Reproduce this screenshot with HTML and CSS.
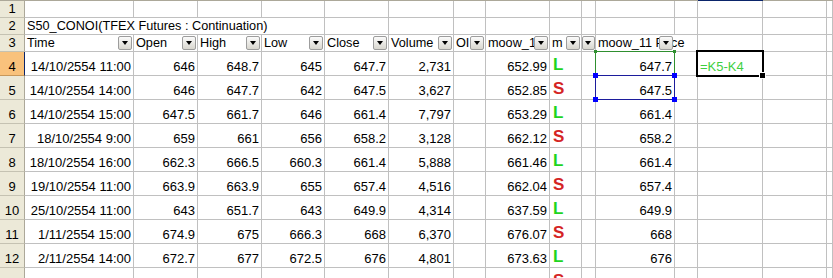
FILE: index.html
```html
<!DOCTYPE html>
<html lang="th">
<head>
    <meta charset="UTF-8">
    <title>S50_CONOI</title>
    <link rel="stylesheet" href="styles.css">
</head>
<body>

<div class="sheet">
    <!-- bottom edge of the column headers -->
    <div class="strip"></div><div class="strip"></div><div class="strip"></div><div class="strip"></div>
    <div class="strip"></div><div class="strip"></div><div class="strip"></div><div class="strip"></div>
    <div class="strip"></div><div class="strip"></div><div class="strip"></div><div class="strip"></div>
    <div class="strip"></div><div class="strip sel"></div><div class="strip"></div><div class="strip"></div>

    <!-- row 1 -->
    <div class="c rh">1</div>
    <div class="c"></div><div class="c"></div><div class="c"></div><div class="c"></div><div class="c"></div>
    <div class="c"></div><div class="c"></div><div class="c"></div><div class="c"></div><div class="c"></div>
    <div class="c"></div><div class="c"></div><div class="c"></div><div class="c"></div><div class="c"></div>

    <!-- row 2 -->
    <div class="c rh">2</div>
    <div class="c title">S50_CONOI(TFEX Futures : Continuation)</div>
    <div class="c"></div><div class="c"></div><div class="c"></div><div class="c"></div><div class="c"></div>
    <div class="c"></div><div class="c"></div><div class="c"></div><div class="c"></div><div class="c"></div>
    <div class="c"></div>

    <!-- row 3 : autofilter -->
    <div class="c rh">3</div>
    <div class="c hd">Time<span class="dd"></span></div>
    <div class="c hd">Open<span class="dd"></span></div>
    <div class="c hd">High<span class="dd"></span></div>
    <div class="c hd">Low<span class="dd"></span></div>
    <div class="c hd">Close<span class="dd"></span></div>
    <div class="c hd">Volume<span class="dd"></span></div>
    <div class="c hd">OI<span class="dd"></span></div>
    <div class="c hd">moow_1<span class="dd"></span></div>
    <div class="c hd">m<span class="dd"></span></div>
    <div class="c hd"><span class="dd dd-j"></span></div>
    <div class="c hd spill"><span class="txt">moow_11 Price</span><span class="dd"></span></div>
    <div class="c hd"></div>
    <div class="c"></div><div class="c"></div><div class="c"></div>
</div>

<script>
    var rows = [
        ["14/10/2554 11:00", "646", "648.7", "645", "647.7", "2,731", "652.99", "L", "647.7"],
        ["14/10/2554 14:00", "646", "647.7", "642", "647.5", "3,627", "652.85", "S", "647.5"],
        ["14/10/2554 15:00", "647.5", "661.7", "646", "661.4", "7,797", "653.29", "L", "661.4"],
        ["18/10/2554 9:00", "659", "661", "656", "658.2", "3,128", "662.12", "S", "658.2"],
        ["18/10/2554 16:00", "662.3", "666.5", "660.3", "661.4", "5,888", "661.46", "L", "661.4"],
        ["19/10/2554 11:00", "663.9", "663.9", "655", "657.4", "4,516", "662.04", "S", "657.4"],
        ["25/10/2554 11:00", "643", "651.7", "643", "649.9", "4,314", "637.59", "L", "649.9"],
        ["1/11/2554 15:00", "674.9", "675", "666.3", "668", "6,370", "676.07", "S", "668"],
        ["2/11/2554 14:00", "672.7", "677", "672.5", "676", "4,801", "673.63", "L", "676"],
        ["3/11/2554 10:00", "676", "678.9", "672.5", "674", "4,344", "673.73", "S", "674"]
    ];

    var sheet = document.querySelector(".sheet");
    var html = "";

    rows.forEach(function(r, i) {
        var n = i + 4;
        html += '<div class="c rh' + (n == 4 ? ' on' : '') + '">' + n + '</div>';
        for (var k = 0; k < 6; k++) {
            html += '<div class="c num">' + r[k] + '</div>';
        }
        html += '<div class="c"></div>';
        html += '<div class="c num">' + r[6] + '</div>';
        html += '<div class="c sig ' + (r[7] == "L" ? "long" : "short") + '">' + r[7] + '</div>';
        html += '<div class="c"></div>';

        // range boxes of the formula being edited (K4 green, K5 blue)
        var box = "";
        if (n == 4) box = '<div class="ref ref-green"><i class="h tl"></i><i class="h tr"></i></div>';
        if (n == 5) box = '<div class="ref ref-blue"><i class="h tl"></i><i class="h tr"></i><i class="h bl"></i><i class="h br"></i></div>';
        html += '<div class="c num">' + r[8] + box + '</div>';

        html += '<div class="c"></div>';
        if (n == 4) {
            html += '<div class="c formula">=K5-K4<div class="active"><i class="fill"></i></div></div>';
        } else {
            html += '<div class="c"></div>';
        }
        html += '<div class="c"></div><div class="c"></div>';
    });

    sheet.insertAdjacentHTML("beforeend", html);
</script>

</body>
</html>
```

FILE: styles.css
```css
body {
    margin: 0;
    background: #fff;
    font-family: "Liberation Sans", Arial, sans-serif;
    font-size: 13px;
    color: #000;
    overflow: hidden;
}
.sheet {
    display: grid;
    grid-template-columns: 25px 109px 64px 64px 63px 64px 65px 32px 64px 32px 14px 79px 23px 65px 64px 1fr;
    grid-template-rows: 1px 17px 17px 17px repeat(10, 24px);
    width: 833px;
    height: 278px;
    overflow: hidden;
}
.strip {
    background: #aca899;
}
.strip.sel {
    background: #0a246a;
}
.c {
    box-sizing: border-box;
    border-right: 1px solid #c0c0c0;
    border-bottom: 1px solid #c0c0c0;
    display: flex;
    align-items: flex-end;
    line-height: 15px;
    white-space: nowrap;
    padding: 0 2px 0 2px;
    position: relative;
    min-width: 0;
}
.rh {
    background: #ece9d8;
    border-right-color: #aca899;
    border-bottom-color: #c5c2b2;
    justify-content: center;
    padding: 0 0 1px 0;
}
.rh.on {
    background: #f9c27c;
    border-right-color: #0a246a;
    border-bottom-color: #c8985a;
}
.title {
    grid-column: span 4;
    font-size: 12.7px;
}
.hd {
    padding-left: 2px;
    font-size: 12.7px;
}
.spill {
    border-right-color: #fff;
    overflow: visible;
}
.spill .txt {
    position: relative;
    z-index: 1;
}
/* autofilter button */
.dd {
    position: absolute;
    right: 1px;
    top: 1px;
    width: 14px;
    height: 14px;
    box-sizing: border-box;
    border: 1px solid #9d9d9d;
    border-radius: 2px;
    background: linear-gradient(#fbfbfb, #d9d7cf);
    z-index: 2;
}
.dd::after {
    content: "";
    position: absolute;
    left: 3px;
    top: 4px;
    border-left: 3.5px solid transparent;
    border-right: 3.5px solid transparent;
    border-top: 4px solid #000;
}
.dd-j {
    right: 0;
    width: 13px;
}
.dd-j::after {
    left: 2px;
}
.num {
    justify-content: flex-end;
    padding-bottom: 1px;
}
.sig {
    font-size: 17px;
    font-weight: bold;
    padding: 0 0 3px 3px;
}
.long {
    color: #1fd41f;
}
.short {
    color: #d42424;
}
.formula {
    color: #3fcf3f;
    padding-bottom: 1px;
}
/* reference ranges */
.ref {
    position: absolute;
    left: -1px;
    top: -1px;
    right: -1px;
    bottom: -1px;
    z-index: 3;
}
.ref-green {
    border: 1px solid #2f8f2f;
}
.ref-blue {
    border: 1px solid #1c1c9c;
    z-index: 4;
}
.h {
    position: absolute;
    width: 5px;
    height: 5px;
    background: #0000ff;
}
.ref-green .h {
    width: 3px;
    height: 3px;
    background: #2f8f2f;
}
.ref-green .tl { left: -2px; top: -2px; }
.ref-green .tr { right: -2px; top: -2px; }
.ref-blue .tl { left: -3px; top: -3px; }
.ref-blue .tr { right: -3px; top: -3px; }
.ref-blue .bl { left: -3px; bottom: -3px; }
.ref-blue .br { right: -3px; bottom: -3px; }
.active {
    position: absolute;
    left: -2px;
    top: -2px;
    right: -2px;
    bottom: -2px;
    border: 2px solid #000;
    z-index: 3;
}
.fill {
    position: absolute;
    right: -4px;
    bottom: -4px;
    width: 7px;
    height: 7px;
    background: #000;
    border: 1px solid #fff;
    box-sizing: border-box;
}
```
